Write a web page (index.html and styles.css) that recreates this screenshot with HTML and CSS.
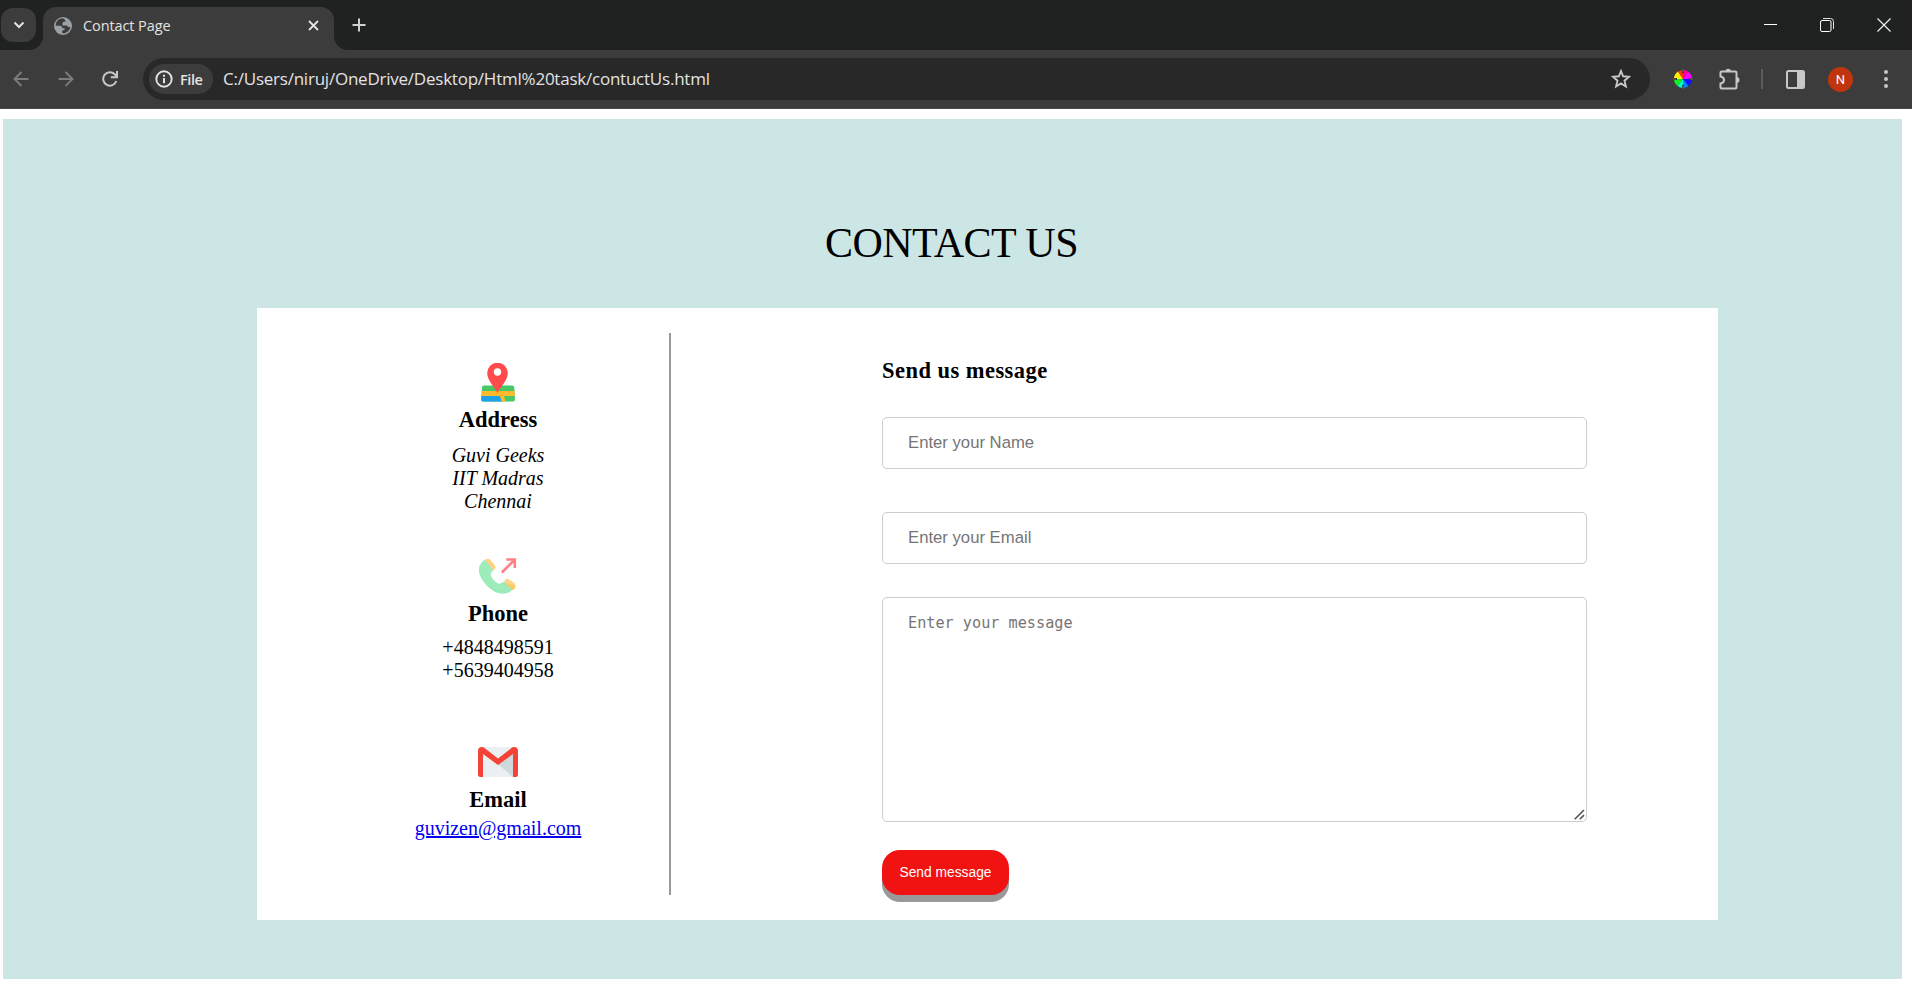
FILE: index.html
```html
<!DOCTYPE html>
<html lang="en">
<head>
<meta charset="utf-8">
<title>Contact Page</title>
<link rel="stylesheet" href="styles.css">
</head>
<body>
<header class="browser">
  <div class="tabstrip">
    <div class="search-cell"><button class="tab-search" aria-label="Search tabs"><svg width="12" height="8" viewBox="0 0 12 8"><path d="M1.500 1.500 6 6l4.500-4.500" fill="none" stroke="#e3e3e3" stroke-width="2"/></svg></button></div>
    <div class="tab">
      <svg width="18" height="18" viewBox="0 0 18 18"><circle cx="9" cy="9" r="9" fill="#9aa0a6"/><path d="M9.500 1.600C6 1 3 3 2 6.300L1.600 8.800h4.200c1.500 0 2.700 1 2.700 2.500h2v2H8.300v3c4 .3 7.500-2.500 8-6.300h-1.600c-.8 0-1.500-.6-1.700-1.400H8.500V6.500c0-.9.700-1.700 1.600-1.700h1.500c0-1-.9-1.500-.9-2.500Z" fill="#3c3c3c"/></svg>
      <span class="tab-title">Contact Page</span>
      <svg class="tab-close" width="11" height="11" viewBox="0 0 11 11"><path d="m1 1 9 9M10 1 1 10" stroke="#e3e3e3" stroke-width="1.800"/></svg>
    </div>
    <div class="strip-rest">
      <svg class="plus" width="14" height="14" viewBox="0 0 14 14"><path d="M7 .5v13M.5 7h13" stroke="#d0d0d0" stroke-width="2"/></svg>
      <div class="window-buttons">
        <svg width="13" height="14" viewBox="0 0 13 14"><path d="M0 6.500h13" stroke="#fff"/></svg>
        <svg width="14" height="14" viewBox="0 0 14 14"><path d="M3 .5h7.500q3 0 3 3V11" fill="none" stroke="#ddd"/><rect x=".5" y="2.500" width="10.500" height="11" rx="1.500" fill="none" stroke="#fff"/></svg>
        <svg width="14" height="14" viewBox="0 0 14 14"><path d="m.5.5 13 13m0-13-13 13" stroke="#eee" stroke-width="1.200"/></svg>
      </div>
    </div>
  </div>
  <div class="toolbar">
    <div class="nav">
      <svg width="16" height="16" viewBox="0 0 16 16"><path d="M15.500 8H1.500M8.500 1l-7 7 7 7" fill="none" stroke="#7c7c7c" stroke-width="1.900"/></svg>
      <svg width="16" height="16" viewBox="0 0 16 16"><path d="M.5 8h14M7.500 1l7 7-7 7" fill="none" stroke="#7c7c7c" stroke-width="1.900"/></svg>
      <svg width="16" height="16" viewBox="0 0 16 16"><path d="M14.300 10A6.700 6.700 0 1 1 12.700 3.200L14.500 5" fill="none" stroke="#c7c7c7" stroke-width="2"/><path d="M15 0v6.200H8.800" fill="none" stroke="#c7c7c7" stroke-width="2"/></svg>
    </div>
    <div class="omnibox">
      <span class="chip"><svg width="18" height="18" viewBox="0 0 18 18"><circle cx="9" cy="9" r="7.700" fill="none" stroke="#e3e3e3" stroke-width="1.900"/><path d="M9 8v5.200M9 4.800v2" stroke="#e3e3e3" stroke-width="2"/></svg><span class="file">File</span></span>
      <span class="url">C:/Users/niruj/OneDrive/Desktop/Html%20task/contuctUs.html</span>
      <svg class="star" width="20" height="20" viewBox="0 0 20 20"><path d="m10 2 2.100 5.300 5.900.5-4.500 3.900 1.400 5.800-4.900-3.100-4.900 3.100 1.400-5.800L2 7.800l5.900-.5Z" fill="none" stroke="#c7c7c7" stroke-width="1.900"/></svg>
    </div>
    <div class="actions">
      <svg width="20" height="20" viewBox="0 0 20 20"><path d="M10 10V1A9 9 0 0 1 15 2.500Z" fill="#f09"/><path d="M10 10 15 2.500A9 9 0 0 1 19 10Z" fill="#f0f"/><path d="M10 10h9a9 9 0 0 1-3.500 7Z" fill="#11f"/><path d="m10 10 5.500 7A9 9 0 0 1 10 19Z" fill="#08f"/><path d="M10 10v9a9 9 0 0 1-5.500-2Z" fill="#0fc"/><path d="m10 10-5.500 7A9 9 0 0 1 1 10Z" fill="#1e2"/><path d="M10 10H1a9 9 0 0 1 4-7.500Z" fill="#fe0"/><path d="M10 10 5 2.500A9 9 0 0 1 10 1Z" fill="#f30"/><path d="M10 0v4m0 12v4M0 10h4m12 0h4" stroke="#222" stroke-width="1.800"/><path d="M10 0v3.500m0 13V20M0 10h3.500m13 0H20" stroke="#bbb" stroke-width=".6"/></svg>
      <svg class="extensions" width="22" height="22" viewBox="0 0 22 22"><path d="M3.500 3.500h14q1 0 1 1v15q0 1-1 1h-14q-1 0-1-1v-4q3.500-.5 3.500-3.500T2.500 8.500v-4q0-1 1-1Z" fill="none" stroke="#c7c7c7" stroke-width="2"/><path d="M7.500 3.500a2.700 2.700 0 0 1 5.400 0ZM18.500 9a3 3 0 0 1 0 6Z" fill="#c7c7c7"/></svg>
      <i class="separator"></i>
      <svg width="19" height="19" viewBox="0 0 19 19"><rect x="1" y="1" width="17" height="17" rx="1.500" fill="none" stroke="#c7c7c7" stroke-width="2"/><path d="M11 1h7v17h-7Z" fill="#c7c7c7"/></svg>
      <span class="avatar">N</span>
      <svg class="menu" width="4" height="18" viewBox="0 0 4 18" fill="#c7c7c7"><circle cx="2" cy="2" r="2"/><circle cx="2" cy="9" r="2"/><circle cx="2" cy="16" r="2"/></svg>
    </div>
  </div>
</header>

<main class="page">
  <h1 class="title">CONTACT US</h1>
  <section class="card">
    <div class="info">
      <div class="entry">
        <svg width="40" height="40" viewBox="0 0 40 40"><clipPath id="map"><path d="M6 22.500h28q2 0 2.300 2L37 36.500q0 2-2 2H5q-2 0-1.800-2L4 24.500q.3-2 2-2Z"/></clipPath><g clip-path="url(#map)"><path fill="#46c768" d="M3 22h35v18H3Z"/><path fill="#1da1e8" d="M3 33h19l3 7H3Z"/><path fill="#ffb92c" d="M3 28h35v5H26l2 7h-4l-2-7H3Z"/></g><path d="M19.500 30C16.500 23.500 9.200 17.500 9.200 10a10.300 10.300 0 0 1 20.600 0C29.800 17.500 22.500 23.500 19.500 30Z" fill="#ff4b4b"/><circle cx="19.500" cy="9" r="3.700" fill="#fff"/></svg>
        <h3 class="label">Address</h3>
        <address class="text">Guvi Geeks<br>IIT Madras<br>Chennai</address>
      </div>
      <div class="entry">
        <svg width="40" height="40" viewBox="0 0 40 40"><g transform="translate(-.7 -1)"><path d="M8 3.500C-2 10 1 20 8 28c8 9 19 14 28 5l-8-8c-3 1-5 4-8 2-4-3-6-5-6.500-8-.5-3 3-4 3-6Z" fill="#9eebbb"/><path d="M2 11c0 15 20 32 33 22 2-1 2-1 2-2C28 44 1 28 2 11Z" fill="#7eeda5"/><path d="M8 4q3-3 6 1l4 5q1 3-2 4Z" fill="#ffd27d"/><path d="M27 26q1-4 4-3l6 4q3 3-1 7Z" fill="#ffd58a"/><path d="m27 27 9 7q2-2 2-4Z" fill="#ffca62"/><path d="M24.500 16.500 37 4M29 3.500h8.500V12" fill="none" stroke="#ff8086" stroke-width="2.600"/></g></svg>
        <h3 class="label">Phone</h3>
        <p class="text">+4848498591<br>+5639404958</p>
      </div>
      <div class="entry">
        <svg width="40" height="40" viewBox="0 0 40 40"><path d="M3 5h34v30H3Z" fill="#eceff1"/><path d="m20 22 15-12v25Z" fill="#cfd8dc"/><path d="M5 35H2.500Q0 35 0 32.500V9Q0 5 4 5q1.500 0 2.500 1L20 16.500 33.500 6q1-1 2.500-1 4 0 4 4v23.500q0 2.500-2.500 2.500H35V12L20 23 5 12Z" fill="#f44336"/></svg>
        <h3 class="label">Email</h3>
        <a class="text" href="mailto:guvizen@gmail.com">guvizen@gmail.com</a>
      </div>
    </div>
    <form class="form">
      <h3 class="form-title">Send us message</h3>
      <input class="field" type="text" placeholder="Enter your Name">
      <input class="field" type="email" placeholder="Enter your Email">
      <div class="message-box">
        <textarea class="field message" placeholder="Enter your message"></textarea>
        <svg class="grip" width="11" height="11" viewBox="0 0 11 11"><path d="M.7 10.300 10 1M5.800 10.300 10 6.100" stroke="#555659" stroke-width="1.600"/></svg>
      </div>
      <button class="send" type="button">Send message</button>
    </form>
  </section>
</main>
</body>
</html>
```

FILE: styles.css
```css
* { box-sizing: border-box; }
body { margin: 0; background: #fff; font-family: "Liberation Serif", serif; color: #000; }
svg { display: block; flex: none; }
h1, h3, p { margin: 0; }

.browser { height: 109px; background: #3c3c3c; border-bottom: 1px solid #4a4647; font-family: "Open Sans", sans-serif; color: #e3e3e3; }
.tabstrip { display: flex; height: 50px; background: linear-gradient(#202221 0 0) top / 100% 25px no-repeat, #3c3c3c; }
.search-cell { width: 43px; background: #202221; border-bottom-right-radius: 14px; padding: 8px 0 0 1px; }
.tab-search { width: 35px; height: 34px; padding: 0; border: 0; border-radius: 12px; background: #3c3c3c; display: flex; align-items: center; justify-content: center; }
.tab { width: 291px; height: 43px; margin-top: 7px; padding: 0 15px 6px 11px; display: flex; align-items: center; border-radius: 13px 13px 0 0; background: #3c3c3c; }
.tab-title { margin-left: 11px; font-size: 14.500px; letter-spacing: -.1px; line-height: 20px; }
.tab-close { margin-left: auto; }
.strip-rest { flex: 1; background: #202221; border-bottom-left-radius: 14px; padding: 18px 14px 0 18px; display: flex; justify-content: space-between; }
.window-buttons { display: flex; gap: 43px; padding-right: 7px; }

.toolbar { height: 58px; display: flex; align-items: center; padding-right: 24px; }
.nav { width: 143px; padding-left: 13px; display: flex; gap: 28.500px; }
.omnibox { width: 1507px; height: 42px; border-radius: 21px; background: #282828; display: flex; align-items: center; padding: 0 19px 0 6px; }
.chip { width: 64px; height: 30px; border-radius: 15px; background: #3c3c3c; display: flex; align-items: center; padding-left: 6px; gap: 7px; }
.file { font-size: 14.500px; font-weight: 600; letter-spacing: -.4px; }
.url { margin-left: 10px; font-size: 17px; letter-spacing: -.23px; line-height: 24px; white-space: nowrap; }
.star { margin-left: auto; }
.actions { flex: 1; display: flex; align-items: center; gap: 23px; padding-left: 23px; }
.extensions { margin: 0 -2px 0 2px; }
.separator { width: 2px; height: 20px; background: #5c5c5c; }
.avatar { width: 25px; height: 25px; border-radius: 50%; background: #c0340e; color: #fff; font: 13px/25px Roboto, sans-serif; text-align: center; }
.menu { margin-left: 8px; }

.page { width: 1899px; height: 860px; margin: 10px 0 0 3px; padding-top: 101px; background: #cbe6e4; }
.title { font-size: 42px; font-weight: 400; letter-spacing: -.55px; line-height: 46px; height: 88px; padding-right: 2px; text-align: center; }
.card { width: 1461px; height: 612px; margin-left: 254px; padding: 25px 131px 25px 0; background: #fff; display: flex; justify-content: space-between; }
.info { width: 414px; height: 562px; border-right: 2px solid #999; padding: 30px 0 0 70px; }
.entry { display: flex; flex-direction: column; align-items: center; text-align: center; }
.entry:nth-child(1) { height: 194px; }
.entry:nth-child(2) { height: 185px; }
.label, .form-title { font-size: 22.500px; line-height: 27px; }
.label { margin-top: 3px; }
.text { margin-top: 11px; font-size: 20px; line-height: 23px; }
.entry:nth-child(2) .text { margin-top: 9px; }
.entry:nth-child(3) .label { margin-top: 4px; }
.entry:nth-child(3) .text { margin-top: 4px; }
a.text { color: #00e; }

.form { width: 705px; padding-top: 24px; display: flex; flex-direction: column; align-items: flex-start; }
.form-title { letter-spacing: .46px; margin-bottom: 33px; }
.field { width: 705px; height: 52px; margin: 0 0 43px; padding: 0 25px; border: 1px solid #ccc; border-radius: 5px; background: #fff; font: 16.700px "Liberation Sans", Arial, sans-serif; }
.field::placeholder { color: #757575; opacity: 1; }
.field[type="email"] { margin-bottom: 33px; }
.message-box { position: relative; height: 225px; margin-bottom: 28px; }
.message { display: block; height: 225px; margin: 0; padding-top: 15px; resize: none; font: 15.200px/20px "DejaVu Sans Mono", monospace; }
.grip { position: absolute; right: 2px; bottom: 2px; }
.send { width: 127px; height: 45px; border: 0; border-radius: 18px; padding: 0 0 1px; background: #f11212; color: #fff; box-shadow: 0 7px #999; font: 13.800px "Liberation Sans", Arial, sans-serif; }
```
